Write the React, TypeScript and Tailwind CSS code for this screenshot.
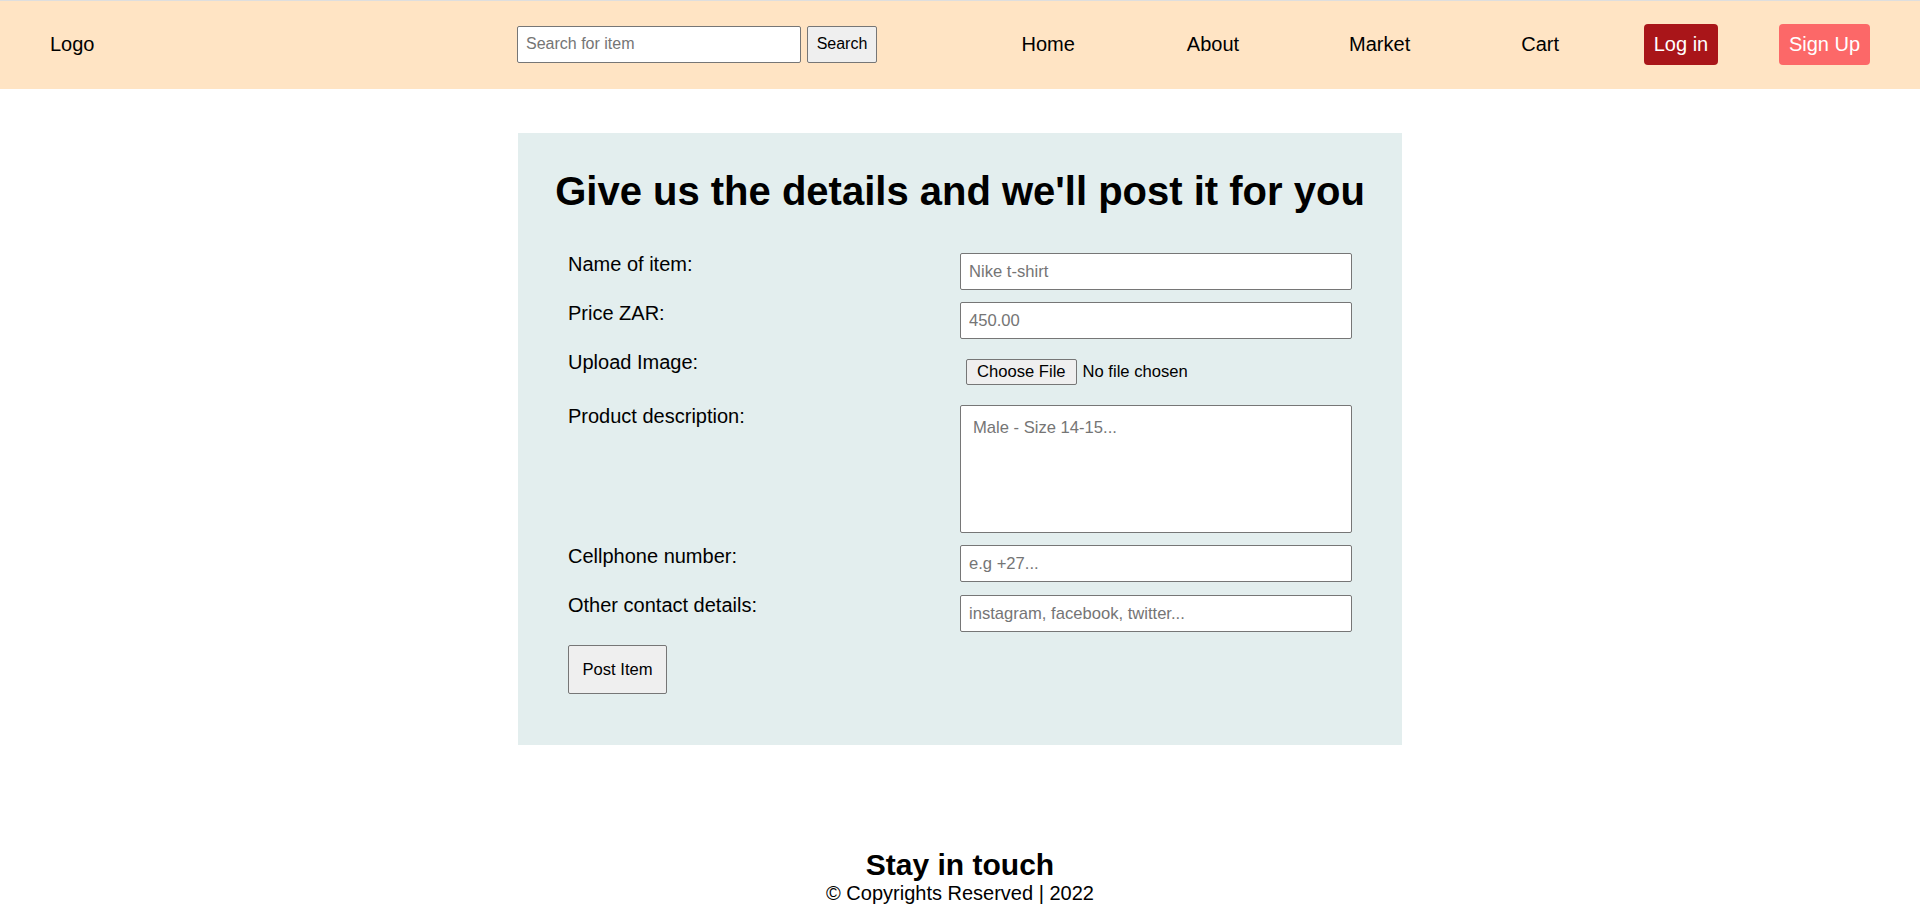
import { useState } from "react";

const navLinks = [
  { name: "Home", gap: "" },
  { name: "About", gap: "ml-[112px]" },
  { name: "Market", gap: "ml-[110px]" },
  { name: "Cart", gap: "ml-[111px]" },
];

export default function App() {
  const [search, setSearch] = useState("");
  const [form, setForm] = useState({
    name: "",
    price: "",
    description: "",
    phone: "",
    other: "",
  });

  const update = (key: string, value: string) => {
    setForm({ ...form, [key]: value });
  };

  return (
    <div className="bg-white text-black font-['Liberation_Sans',Arial,sans-serif]">
      {/* navbar */}
      <header className="h-[89px] pb-[2px] border-t border-[#dedede] bg-[#ffe4c4] flex items-center px-[50px]">
        <div className="w-[467px] text-[20px]">Logo</div>
        <form
          className="flex items-center gap-[6px]"
          onSubmit={(e) => e.preventDefault()}
        >
          <input
            type="text"
            value={search}
            onChange={(e) => setSearch(e.target.value)}
            placeholder="Search for item"
            className="w-[284px] h-[37px] bg-white border border-[#767676] rounded-[2px] px-2 text-[16px] placeholder:text-[#757575] outline-none"
          />
          <button
            type="submit"
            className="w-[70px] h-[37px] bg-[#efefef] border border-[#767676] rounded-[2px] text-[16px]"
          >
            Search
          </button>
        </form>
        <nav className="ml-auto flex items-center text-[20px]">
          {navLinks.map((link) => (
            <a key={link.name} href="#" className={link.gap}>
              {link.name}
            </a>
          ))}
          <a
            href="#"
            className="ml-[85px] h-[41px] w-[74px] flex items-center justify-center rounded-[4px] bg-[#a91519] text-white"
          >
            Log in
          </a>
          <a
            href="#"
            className="ml-[61px] h-[41px] w-[91px] flex items-center justify-center rounded-[4px] bg-[#fc6868] text-white"
          >
            Sign Up
          </a>
        </nav>
      </header>

      {/* post item form */}
      <main className="mt-[44px] mx-auto w-[884px] bg-[#e3eeee] px-[50px] pt-[35px] pb-[51px]">
        <h1 className="-mx-[50px] whitespace-nowrap text-[40px] leading-[46px] font-bold text-center">
          Give us the details and we'll post it for you
        </h1>
        <form
          className="mt-[39px] grid grid-cols-2 gap-y-3 items-start text-[20px] leading-[23px]"
          onSubmit={(e) => e.preventDefault()}
        >
          <label>Name of item:</label>
          <input
            type="text"
            value={form.name}
            onChange={(e) => update("name", e.target.value)}
            placeholder="Nike t-shirt"
            className="h-[37px] w-full bg-white border border-[#767676] rounded-[2px] px-2 text-[16.6px] placeholder:text-[#757575] outline-none"
          />

          <label>Price ZAR:</label>
          <input
            type="text"
            value={form.price}
            onChange={(e) => update("price", e.target.value)}
            placeholder="450.00"
            className="h-[37px] w-full bg-white border border-[#767676] rounded-[2px] px-2 text-[16.6px] placeholder:text-[#757575] outline-none"
          />

          <label>Upload Image:</label>
          <input
            type="file"
            className="h-[42px] py-2 pl-[6px] text-[16.6px] leading-[18px] file:mr-[6px] file:h-[26px] file:px-[10px] file:border file:border-[#767676] file:bg-[#efefef] file:rounded-[2px] file:text-[16.6px]"
          />

          <label>Product description:</label>
          <textarea
            value={form.description}
            onChange={(e) => update("description", e.target.value)}
            placeholder="Male - Size 14-15..."
            className="h-[128px] w-full bg-white border border-[#767676] rounded-[2px] p-3 text-[16.6px] leading-[19px] placeholder:text-[#757575] outline-none resize-none"
          />

          <label>Cellphone number:</label>
          <input
            type="text"
            value={form.phone}
            onChange={(e) => update("phone", e.target.value)}
            placeholder="e.g +27..."
            className="h-[37px] w-full bg-white border border-[#767676] rounded-[2px] px-2 text-[16.6px] placeholder:text-[#757575] outline-none"
          />

          <label className="mb-px">Other contact details:</label>
          <input
            type="text"
            value={form.other}
            onChange={(e) => update("other", e.target.value)}
            placeholder="instagram, facebook, twitter..."
            className="mt-px h-[37px] w-full bg-white border border-[#767676] rounded-[2px] px-2 text-[16.6px] placeholder:text-[#757575] outline-none"
          />

          <button
            type="submit"
            className="mt-px w-[99px] h-[49px] bg-[#efefef] border border-[#767676] rounded-[2px] text-[16.6px]"
          >
            Post Item
          </button>
        </form>
      </main>

      {/* footer */}
      <footer className="mt-[103px] text-center">
        <h2 className="text-[30px] leading-[34px] font-bold">Stay in touch</h2>
        <p className="text-[20px] leading-[23px]">
          © Copyrights Reserved | 2022
        </p>
      </footer>
    </div>
  );
}
